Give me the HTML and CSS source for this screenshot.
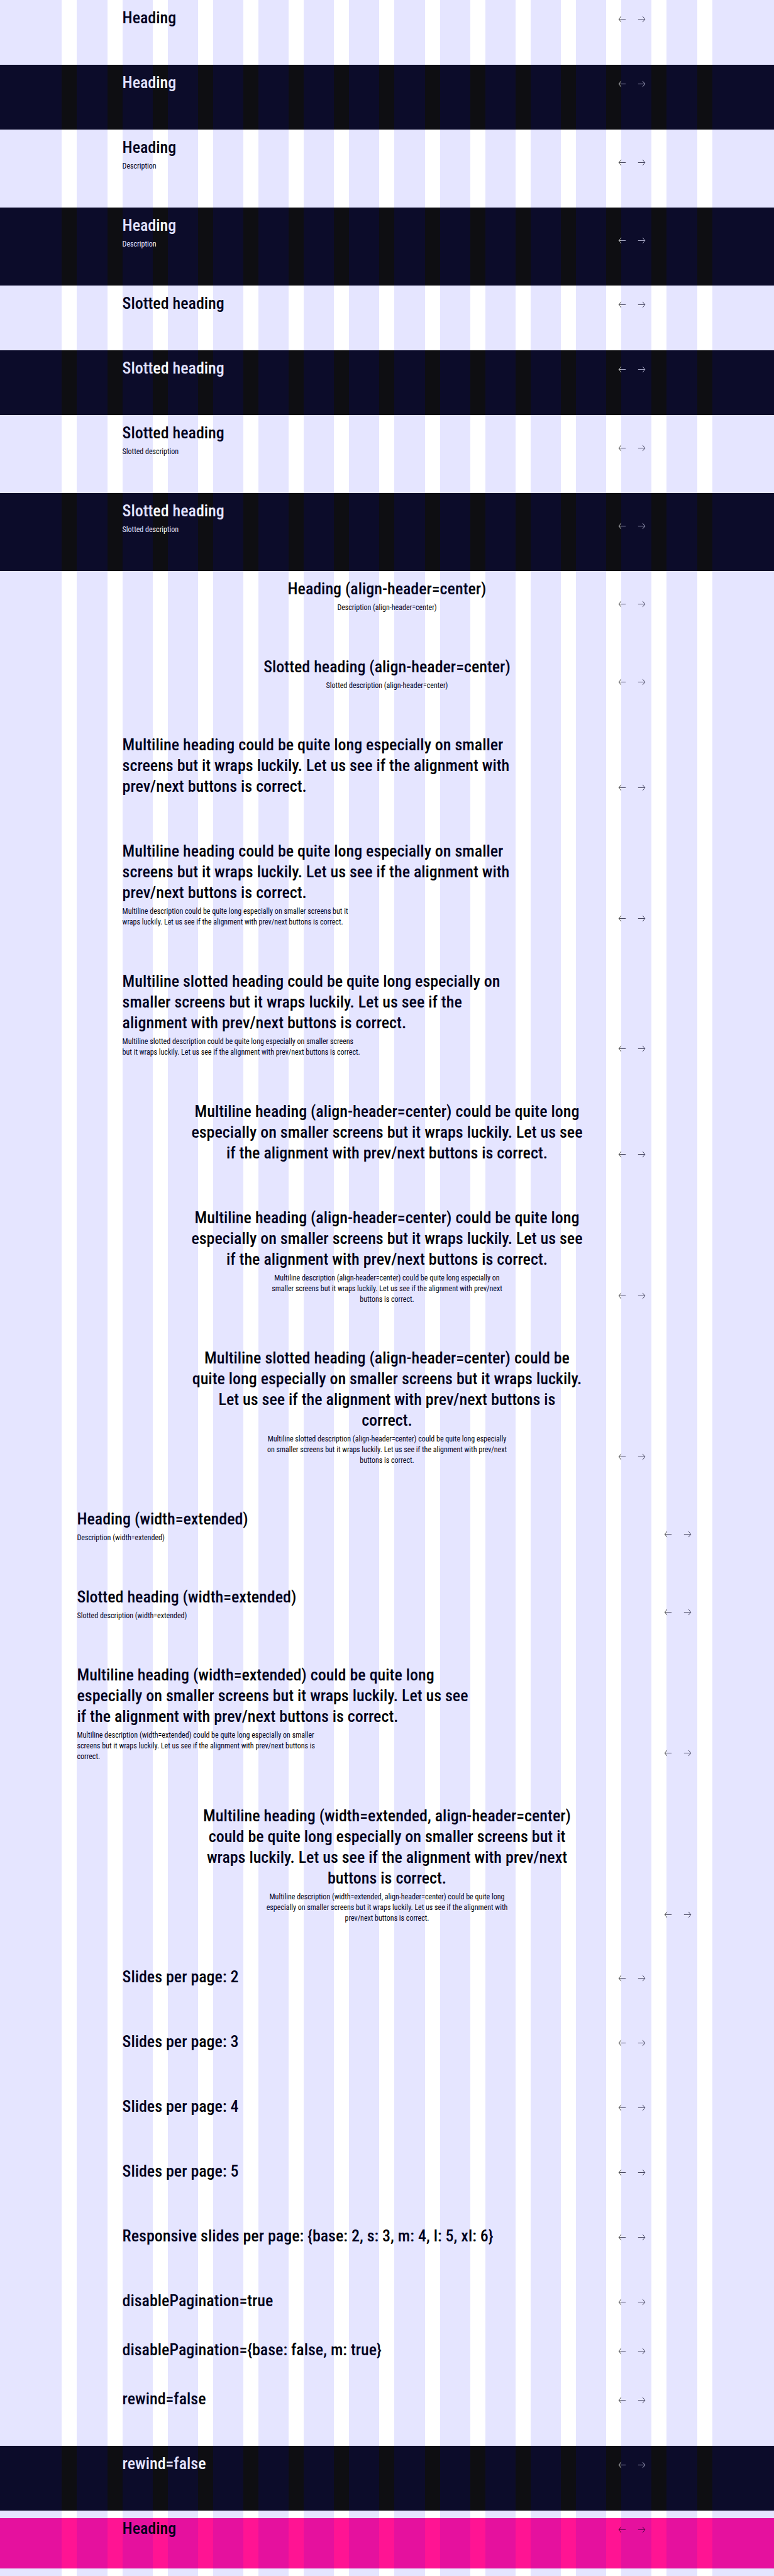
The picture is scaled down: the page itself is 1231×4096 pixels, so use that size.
FILE: index.html
```html
<!DOCTYPE html>
<html lang="en">
<head>
<meta charset="utf-8">
<title>Carousel overview</title>
<link rel="stylesheet" href="styles.css">
</head>
<body>
<main id="page" class="page"></main>
<div id="overlay" class="overlay" aria-hidden="true"></div>
<script src="carousel.js"></script>
</body>
</html>
```
FILE: styles.css
```css
* {
  box-sizing: border-box;
}

body {
  position: relative;
  margin: 0;
  background: #fff;
  color: #010205;
  font-family: "Roboto Condensed", Roboto, "Liberation Sans", sans-serif;
}

h2,
p {
  margin: 0;
}

.carousel,
.overlay {
  display: grid;
  grid-template-columns: 8% repeat(14, minmax(0, 1fr)) 8%;
  column-gap: 24px;
}

/* Column overlay, painted above every example */
.overlay {
  position: absolute;
  inset: 0;
  pointer-events: none;
}

.overlay__column {
  background: rgba(0, 0, 255, 0.1);
}

.carousel {
  padding: 12px 0 58px;
}

.carousel--described {
  padding-bottom: 57px;
}

.carousel--dense {
  padding-bottom: 56px;
}

.carousel--unpaged {
  padding-bottom: 33px;
}

.carousel--dark {
  background: #0e0e12;
  color: #fbfcff;
}

.highlight {
  margin: 12px 0;
  background: #ff1493;
}

.highlight .carousel {
  padding: 0 0 47px;
}

.carousel__header {
  grid-column: 3 / -3;
  display: grid;
  grid-template-columns: minmax(0, 1fr) auto;
  align-items: end;
}

.carousel--extended .carousel__header {
  grid-column: 2 / -2;
}

.carousel__text {
  grid-area: 1 / 1 / 2 / -1;
}

.carousel--center .carousel__text {
  display: grid;
  justify-items: center;
  text-align: center;
}

.carousel__heading {
  max-width: 630px;
  font-size: 26px;
  font-weight: 500;
  line-height: 33px;
}

.carousel__description {
  max-width: 386px;
  margin-top: 5px;
  font-size: 12px;
  line-height: 17px;
}

.carousel__nav {
  grid-area: 1 / 2;
  display: flex;
}

.carousel__button {
  display: grid;
  place-items: center;
  width: 31px;
  height: 30px;
  padding: 0;
  border: 0;
  background: none;
  color: inherit;
}

.carousel__icon {
  display: block;
  width: 17px;
  height: 17px;
  fill: none;
  stroke: currentColor;
}
```
FILE: carousel.js
```js
const tail = 'could be quite long especially on smaller screens but it wraps luckily. Let us see if the alignment with prev/next buttons is correct.';

const carousels = [
  { heading: 'Heading' },
  { heading: 'Heading', mods: ['dark'] },
  { heading: 'Heading', description: 'Description' },
  { heading: 'Heading', description: 'Description', mods: ['dark'] },
  { heading: 'Slotted heading' },
  { heading: 'Slotted heading', mods: ['dark'] },
  { heading: 'Slotted heading', description: 'Slotted description' },
  { heading: 'Slotted heading', description: 'Slotted description', mods: ['dark'] },
  { heading: 'Heading (align-header=center)', description: 'Description (align-header=center)', mods: ['center'] },
  { heading: 'Slotted heading (align-header=center)', description: 'Slotted description (align-header=center)', mods: ['center'] },
  { heading: `Multiline heading ${tail}` },
  { heading: `Multiline heading ${tail}`, description: `Multiline description ${tail}` },
  { heading: `Multiline slotted heading ${tail}`, description: `Multiline slotted description ${tail.replace(' but', '<br>but')}` },
  { heading: `Multiline heading (align-header=center) ${tail}`, mods: ['center'] },
  { heading: `Multiline heading (align-header=center) ${tail}`, description: `Multiline description (align-header=center) ${tail}`, mods: ['center', 'dense'] },
  { heading: `Multiline slotted heading (align-header=center) ${tail.replace(' correct', '<br>correct')}`, description: `Multiline slotted description (align-header=center) ${tail}`, mods: ['center', 'dense'] },
  { heading: 'Heading (width=extended)', description: 'Description (width=extended)', mods: ['extended'] },
  { heading: 'Slotted heading (width=extended)', description: 'Slotted description (width=extended)', mods: ['extended'] },
  { heading: `Multiline heading (width=extended) ${tail}`, description: `Multiline description (width=extended) ${tail}`, mods: ['extended'] },
  { heading: `Multiline heading (width=extended, align-header=center) ${tail}`, description: `Multiline description (width=extended, align-header=center) ${tail}`, mods: ['extended', 'center', 'dense'] },
  { heading: 'Slides per page: 2' },
  { heading: 'Slides per page: 3' },
  { heading: 'Slides per page: 4' },
  { heading: 'Slides per page: 5' },
  { heading: 'Responsive slides per page: {base: 2, s: 3, m: 4, l: 5, xl: 6}' },
  { heading: 'disablePagination=true', mods: ['unpaged'] },
  { heading: 'disablePagination={base: false, m: true}', mods: ['unpaged'] },
  { heading: 'rewind=false' },
  { heading: 'rewind=false', mods: ['dark'] },
  { heading: 'Heading', highlight: true }
];

const arrows = {
  Previous: 'M20 12H5M9.7 5.5 4.700 12l5 6.500',
  Next: 'M4 12h15M14.300 5.500l5 6.500-5 6.500'
};

const button = label => `
  <button class="carousel__button" type="button" aria-label="${label}">
    <svg class="carousel__icon" viewBox="0 0 24 24"><path d="${arrows[label]}"/></svg>
  </button>`;

const render = ({ heading, description, mods = [], highlight }) => {
  const all = description ? ['described', ...mods] : mods;
  const classes = ['carousel', ...all.map(mod => `carousel--${mod}`)].join(' ');
  const section = `
    <section class="${classes}">
      <div class="carousel__header">
        <div class="carousel__text">
          <h2 class="carousel__heading">${heading}</h2>
          ${description ? `<p class="carousel__description">${description}</p>` : ''}
        </div>
        <div class="carousel__nav">${button('Previous')}${button('Next')}</div>
      </div>
    </section>`;
  return highlight ? `<div class="highlight">${section}</div>` : section;
};

document.getElementById('page').innerHTML = carousels.map(render).join('');
document.getElementById('overlay').innerHTML = '<div class="overlay__column"></div>'.repeat(16);
```
